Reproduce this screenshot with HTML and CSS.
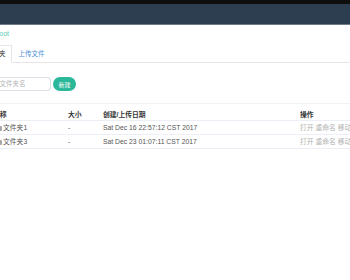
FILE: index.html
```html
<!DOCTYPE html>
<html lang="zh">
<head>
<meta charset="utf-8">
<link rel="stylesheet" href="styles.css">
</head>
<body>
<div class="topband"></div>
<div class="navbar"></div>
<div class="page">
  <div class="crumb"><a class="crumb-link">root</a></div>
  <div class="tabs">
    <div class="tab active">文件夹</div>
    <div class="tab link">上传文件</div>
  </div>
  <div class="toolbar">
    <div class="input">请输入文件夹名</div>
    <button class="btn">新建</button>
  </div>
  <div class="table">
    <div class="row head">
      <div class="cell">名称</div>
      <div class="cell">大小</div>
      <div class="cell">创建/上传日期</div>
      <div class="cell">操作</div>
    </div>
    <div class="row">
      <div class="cell"><span class="ficon"></span>文件夹1</div>
      <div class="cell">-</div>
      <div class="cell">Sat Dec 16 22:57:12 CST 2017</div>
      <div class="cell ops">打开 重命名 移动 删除</div>
    </div>
    <div class="row">
      <div class="cell"><span class="ficon"></span>文件夹3</div>
      <div class="cell">-</div>
      <div class="cell">Sat Dec 23 01:07:11 CST 2017</div>
      <div class="cell ops">打开 重命名 移动 删除</div>
    </div>
  </div>
</div>
</body>
</html>
```

FILE: styles.css
```css
html, body {
  margin: 0;
  padding: 0;
  background: #ffffff;
  overflow: hidden;
}
body {
  width: 350px;
  height: 280px;
  font-family: "Liberation Sans", "Noto Sans CJK SC", sans-serif;
  font-size: 7px;
  color: #333;
}
.topband {
  height: 4px;
  background: #0e0e0e;
}
.navbar {
  height: 20px;
  background: #2d3e50;
  border-bottom: 1px solid #6e7c8a;
}
.page {
  margin-left: -30px;
  width: 430px;
}
.crumb {
  padding: 3px 0 0 27px;
  height: 13px;
  line-height: 11px;
}
.crumb-link {
  color: #5cc9b3;
}
.tabs {
  display: flex;
  margin-top: 4px;
  padding-left: 10px;
  height: 17px;
  border-bottom: 1px solid #e6e6e6;
  font-size: 6.5px;
}
.tab {
  padding: 0 5px;
  line-height: 17px;
  color: #333;
}
.tab.active {
  border: 1px solid #e6e6e6;
  border-bottom: 1px solid #fff;
  margin-bottom: -1px;
  line-height: 16px;
  height: 18px;
  box-sizing: border-box;
}
.tab.link {
  color: #4d8fd8;
  padding-left: 7px;
}
.toolbar {
  display: flex;
  align-items: center;
  gap: 2px;
  margin-top: 14px;
  padding-left: 2px;
}
.input {
  width: 79px;
  height: 14px;
  box-sizing: border-box;
  border: 1px solid #dcdfe6;
  border-radius: 3px;
  padding-left: 7px;
  line-height: 12px;
  color: #b4b4b4;
  font-size: 6.5px;
  white-space: nowrap;
  overflow: hidden;
}
.btn {
  height: 14px;
  width: 23px;
  border: none;
  border-radius: 7px;
  background: #2bb79a;
  color: #fff;
  font-family: "Noto Sans CJK SC", sans-serif;
  font-size: 6px;
  padding: 0;
}
.table {
  margin-top: 12px;
  padding-left: 18px;
  font-size: 6.8px;
}
.row {
  display: grid;
  grid-template-columns: 75px 35px 197px 100px;
  height: 13px;
  line-height: 13px;
  border-bottom: 1px solid #ebeef5;
  color: #555;
}
.row.head {
  height: 16px;
  line-height: 21px;
  font-weight: bold;
  color: #333;
  border-top: 1px solid #f2f2f2;
}
.cell {
  padding-left: 5px;
  white-space: nowrap;
  overflow: hidden;
}
.ops {
  color: #b0b0b0;
}
.ficon {
  display: inline-block;
  width: 7px;
  height: 5px;
  background: #a8a8a8;
  border-radius: 1px;
  margin: 0 1px 0 2px;
  vertical-align: -0.5px;
}
```
